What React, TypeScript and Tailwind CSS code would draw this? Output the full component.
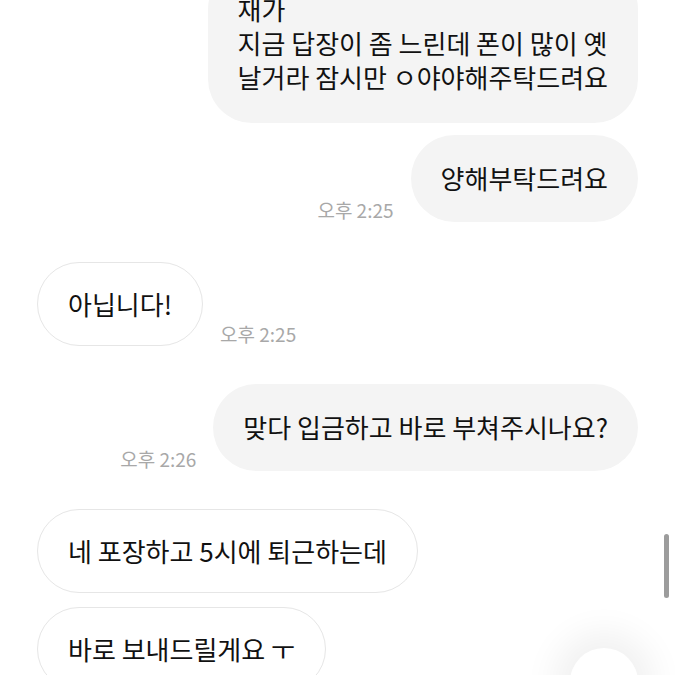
import { ChevronDown } from "lucide-react";

type Msg = {
  id: number;
  mine: boolean;
  lines: string[];
  time?: string;
};

const messages: Msg[] = [
  {
    id: 1,
    mine: true,
    lines: ["재가", "지금 답장이 좀 느린데 폰이 많이 옛", "날거라 잠시만 ㅇ야야해주탁드려요"],
  },
  { id: 2, mine: true, lines: ["양해부탁드려요"], time: "오후 2:25" },
  { id: 3, mine: false, lines: ["아닙니다!"], time: "오후 2:25" },
  { id: 4, mine: true, lines: ["맞다 입금하고 바로 부쳐주시나요?"], time: "오후 2:26" },
  { id: 5, mine: false, lines: ["네 포장하고 5시에 퇴근하는데"] },
  { id: 6, mine: false, lines: ["바로 보내드릴게요 ㅜ"] },
];

const gapBefore: Record<number, string> = {
  1: "mt-[-35px]",
  2: "mt-[12px]",
  3: "mt-[40px]",
  4: "mt-[38px]",
  5: "mt-[38px]",
  6: "mt-[14px]",
};

function Bubble({ msg }: { msg: Msg }) {
  const multi = msg.lines.length > 1;
  const bubble = (
    <div
      className={
        msg.mine
          ? `bg-[#f4f4f4] rounded-[44px] px-[30px] pt-[26.5px] ${multi ? "pb-[29px]" : "pb-[26.5px]"}`
          : "bg-white border border-[#e6e6e6] rounded-[44px] px-[30px] py-[24px]"
      }
    >
      {msg.lines.map((line, i) => (
        <p
          key={i}
          className="text-[26px] leading-[34px] text-[#111] whitespace-nowrap"
        >
          {line}
        </p>
      ))}
    </div>
  );

  const time = msg.time && (
    <span className="text-[19px] leading-[19px] text-[#a8a8a8] mb-[3px] whitespace-nowrap">
      {msg.time}
    </span>
  );

  return (
    <div
      className={`flex items-end gap-[17px] ${gapBefore[msg.id]} ${
        msg.mine ? "justify-end" : "justify-start"
      }`}
    >
      {msg.mine ? (
        <>
          {time}
          {bubble}
        </>
      ) : (
        <>
          {bubble}
          {time}
        </>
      )}
    </div>
  );
}

export default function App() {
  return (
    <div
      className="relative w-[675px] h-[675px] overflow-hidden bg-white"
      style={{ fontFamily: '"Noto Sans CJK KR", "Noto Sans", sans-serif' }}
    >
      <div className="flex flex-col px-[37px]">
        {messages.map((m) => (
          <Bubble key={m.id} msg={m} />
        ))}
      </div>

      {/* scrollbar */}
      <div className="absolute left-[664px] top-[534px] w-[5px] h-[64px] rounded-full bg-[#9c9c9c]" />

      {/* scroll-down button */}
      <div className="absolute left-[570px] top-[648px] w-[68px] h-[68px] rounded-full bg-white shadow-[0_0_34px_16px_rgba(0,0,0,0.06)] flex justify-center pt-[22px]">
        <ChevronDown className="w-[22px] h-[22px] text-[#333]" strokeWidth={2} />
      </div>
    </div>
  );
}
